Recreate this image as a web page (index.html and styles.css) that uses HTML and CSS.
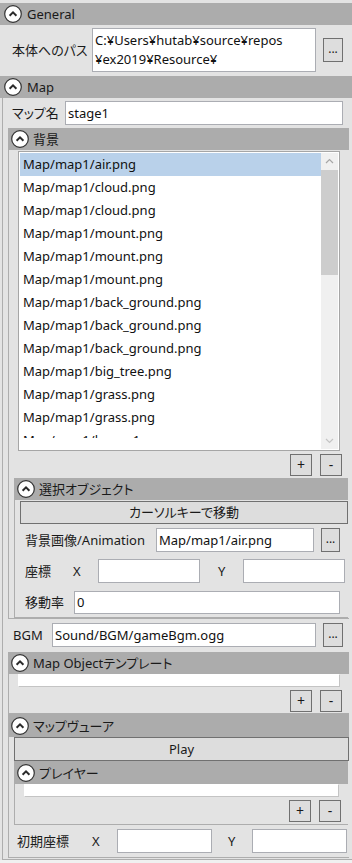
FILE: index.html
```html
<!DOCTYPE html>
<html lang="ja">
<head>
<meta charset="utf-8">
<link rel="stylesheet" href="styles.css">
</head>
<body>
<div class="page">
  <section class="exp top gen">
    <div class="head top-head">
      <svg class="chev" viewBox="0 0 18 18"><circle cx="9" cy="9" r="8.3" fill="#fff" stroke="#333" stroke-width="1.2"/><polyline points="5.6,10.8 9,7.4 12.4,10.8" fill="none" stroke="#2a2a2a" stroke-width="2"/></svg>
      <span class="title">General</span>
    </div>
    <div class="gen-body">
      <span class="lbl lbl-path">本体へのパス</span>
      <div class="tb tb-path">C:¥Users¥hutab¥source¥repos<br>¥ex2019¥Resource¥</div>
      <button class="btn btn-dots btn-dots-gen">...</button>
    </div>
  </section>

  <section class="exp top map">
    <div class="head top-head">
      <svg class="chev" viewBox="0 0 18 18"><circle cx="9" cy="9" r="8.3" fill="#fff" stroke="#333" stroke-width="1.2"/><polyline points="5.6,10.8 9,7.4 12.4,10.8" fill="none" stroke="#2a2a2a" stroke-width="2"/></svg>
      <span class="title">Map</span>
    </div>
    <div class="map-body">
      <div class="row row-name">
        <span class="lbl lbl-name">マップ名</span>
        <div class="tb tb-name">stage1</div>
      </div>

      <section class="exp sub bg">
        <div class="head">
          <svg class="chev" viewBox="0 0 18 18"><circle cx="9" cy="9" r="8.3" fill="#fff" stroke="#333" stroke-width="1.2"/><polyline points="5.6,10.8 9,7.4 12.4,10.8" fill="none" stroke="#2a2a2a" stroke-width="2"/></svg>
          <span class="title">背景</span>
        </div>
        <div class="sub-body bg-body">
          <div class="list">
            <div class="items">
              <div class="item sel">Map/map1/air.png</div>
              <div class="item">Map/map1/cloud.png</div>
              <div class="item">Map/map1/cloud.png</div>
              <div class="item">Map/map1/mount.png</div>
              <div class="item">Map/map1/mount.png</div>
              <div class="item">Map/map1/mount.png</div>
              <div class="item">Map/map1/back_ground.png</div>
              <div class="item">Map/map1/back_ground.png</div>
              <div class="item">Map/map1/back_ground.png</div>
              <div class="item">Map/map1/big_tree.png</div>
              <div class="item">Map/map1/grass.png</div>
              <div class="item">Map/map1/grass.png</div>
              <div class="item">Map/map1/leaves1.png</div>
            </div>
            <div class="sbar">
              <div class="sarrow"><svg viewBox="0 0 17 17"><polyline points="5,10 8.5,6.5 12,10" fill="none" stroke="#a6a6a6" stroke-width="1.2"/></svg></div>
              <div class="thumb"></div>
              <div class="strack"></div>
              <div class="sarrow"><svg viewBox="0 0 17 17"><polyline points="5,7 8.5,10.5 12,7" fill="none" stroke="#c4c4c4" stroke-width="1.2"/></svg></div>
            </div>
          </div>
          <div class="pm pm-bg">
            <button class="btn sq">+</button>
            <button class="btn sq">-</button>
          </div>

          <section class="exp sub sel-obj">
            <div class="head">
              <svg class="chev" viewBox="0 0 18 18"><circle cx="9" cy="9" r="8.3" fill="#fff" stroke="#333" stroke-width="1.2"/><polyline points="5.6,10.8 9,7.4 12.4,10.8" fill="none" stroke="#2a2a2a" stroke-width="2"/></svg>
              <span class="title">選択オブジェクト</span>
            </div>
            <div class="sub-body sel-body">
              <button class="btn wide btn-cursor">カーソルキーで移動</button>
              <div class="row row-anim">
                <span class="lbl lbl-anim">背景画像/Animation</span>
                <div class="tb tb-anim">Map/map1/air.png</div>
                <button class="btn btn-dots btn-dots-anim">...</button>
              </div>
              <div class="row row-pos">
                <span class="lbl lbl-pos">座標</span>
                <span class="lbl lbl-x">X</span>
                <div class="tb tb-xy"></div>
                <span class="lbl lbl-y">Y</span>
                <div class="tb tb-xy"></div>
              </div>
              <div class="row row-rate">
                <span class="lbl lbl-rate">移動率</span>
                <div class="tb tb-rate">0</div>
              </div>
            </div>
          </section>
        </div>
      </section>

      <div class="row row-bgm">
        <span class="lbl lbl-bgm">BGM</span>
        <div class="tb tb-bgm">Sound/BGM/gameBgm.ogg</div>
        <button class="btn btn-dots btn-dots-bgm">...</button>
      </div>

      <section class="exp sub tmpl">
        <div class="head">
          <svg class="chev" viewBox="0 0 18 18"><circle cx="9" cy="9" r="8.3" fill="#fff" stroke="#333" stroke-width="1.2"/><polyline points="5.6,10.8 9,7.4 12.4,10.8" fill="none" stroke="#2a2a2a" stroke-width="2"/></svg>
          <span class="title">Map Objectテンプレート</span>
        </div>
        <div class="sub-body tmpl-body">
          <div class="elist elist-tmpl"></div>
          <div class="pm pm-tmpl">
            <button class="btn sq">+</button>
            <button class="btn sq">-</button>
          </div>
        </div>
      </section>

      <section class="exp sub viewer">
        <div class="head head23">
          <svg class="chev" viewBox="0 0 18 18"><circle cx="9" cy="9" r="8.3" fill="#fff" stroke="#333" stroke-width="1.2"/><polyline points="5.6,10.8 9,7.4 12.4,10.8" fill="none" stroke="#2a2a2a" stroke-width="2"/></svg>
          <span class="title">マップヴューア</span>
        </div>
        <div class="sub-body viewer-body">
          <button class="btn wide btn-play">Play</button>
          <section class="exp sub player">
            <div class="head head23">
              <svg class="chev" viewBox="0 0 18 18"><circle cx="9" cy="9" r="8.3" fill="#fff" stroke="#333" stroke-width="1.2"/><polyline points="5.6,10.8 9,7.4 12.4,10.8" fill="none" stroke="#2a2a2a" stroke-width="2"/></svg>
              <span class="title">プレイヤー</span>
            </div>
            <div class="sub-body player-body">
              <div class="elist elist-player"></div>
              <div class="pm pm-player">
                <button class="btn sq">+</button>
                <button class="btn sq">-</button>
              </div>
            </div>
          </section>
          <div class="row row-init">
            <span class="lbl lbl-init">初期座標</span>
            <span class="lbl lbl-ix">X</span>
            <div class="tb tb-init"></div>
            <span class="lbl lbl-iy">Y</span>
            <div class="tb tb-init"></div>
          </div>
        </div>
      </section>
    </div>
  </section>
</div>
</body>
</html>
```

FILE: styles.css
```css
* { box-sizing: border-box; margin: 0; padding: 0; }

html, body { background: #f0f0f0; }

body {
  width: 352px;
  height: 863px;
  overflow: hidden;
  font-family: "Noto Sans", "Noto Sans CJK JP", sans-serif;
  font-size: 13px;
  color: #1a1a1a;
  font-feature-settings: "palt";
}

.page {
  background: #e3e3e3;
  padding-top: 3px;
}

/* expander headers */
.head {
  height: 22px;
  background: #acacac;
  display: flex;
  align-items: center;
  padding-left: 3px;
  gap: 4px;
  white-space: nowrap;
}
.head23 { height: 23px; }
.top-head { padding-left: 4px; gap: 5px; }
.chev { width: 18px; height: 18px; flex: none; display: block; }
.title { line-height: 18px; }

/* common controls */
.row { display: flex; align-items: flex-start; }
.lbl { flex: none; line-height: 24px; white-space: nowrap; }
.tb {
  flex: none;
  background: #fff;
  border: 1px solid #abadb3;
  height: 24px;
  line-height: 22px;
  padding: 0 2px;
  white-space: nowrap;
  overflow: hidden;
  color: #111;
}
.btn {
  flex: none;
  font: inherit;
  color: #1a1a1a;
  background: #dddddd;
  border: 1px solid #707070;
  display: flex;
  align-items: center;
  justify-content: center;
  line-height: 1;
}
.btn-dots { width: 20px; height: 24px; padding-bottom: 2px; font-size: 12px; }
.sq { width: 22px; height: 22px; font-size: 14px; }
.wide { height: 24px; }

/* General */
.gen { margin-bottom: 1px; }
.gen-body {
  height: 50px;
  display: flex;
  align-items: flex-start;
  padding: 3px 0 0 12px;
}
.lbl-path { width: 80px; line-height: 44px; }
.tb-path {
  width: 224px;
  height: 44px;
  line-height: 19px;
  padding: 2px 2px;
}
.btn-dots-gen { margin: 10px 0 0 7px; }

/* Map */
.map-body {
  margin-left: 2px;
  border-left: 1px solid #adadad;
  border-bottom: 1px solid #adadad;
  padding-bottom: 1px;
}
.row-name { height: 30px; padding: 3px 0 0 9px; }
.lbl-name { width: 53px; }
.tb-name { width: 278px; }

/* nested expanders */
.sub { margin-left: 5px; }
.sub-body {
  border-left: 1px solid #adadad;
  border-bottom: 1px solid #adadad;
}

.bg { width: 341px; }
.bg-body { padding-top: 1px; }

.list {
  margin-left: 9px;
  width: 322px;
  height: 300px;
  border: 1px solid #a6a6a6;
  background: #fff;
  padding: 1px;
  display: flex;
}
.items {
  flex: 1;
  height: 285px;
  overflow: hidden;
}
.item {
  height: 23px;
  line-height: 23px;
  padding-left: 3px;
  white-space: nowrap;
  color: #111;
}
.item.sel { background: #b9d1ea; }
.sbar {
  width: 17px;
  flex: none;
  display: flex;
  flex-direction: column;
  background: #f0f0f0;
}
.sarrow { height: 17px; flex: none; }
.sarrow svg { width: 17px; height: 17px; display: block; }
.thumb { height: 105px; background: #cdcdcd; flex: none; }
.strack { flex: 1; }

.pm { display: flex; gap: 8px; height: 27px; padding-top: 3px; }
.pm-bg { padding-left: 281px; }

.sel-obj { width: 334px; }
.sel-body { height: 118px; padding-top: 1px; }
.btn-cursor { margin-left: 5px; width: 328px; height: 23px; }
.row-anim { margin-top: 4px; height: 24px; padding-left: 10px; }
.lbl-anim { width: 131px; }
.tb-anim { width: 158px; }
.btn-dots-anim { width: 19px; margin-left: 7px; }
.row-pos { margin-top: 7px; height: 24px; padding-left: 10px; }
.lbl-pos { width: 48px; }
.lbl-x { width: 25px; }
.tb-xy { width: 102px; }
.lbl-y { width: 25px; margin-left: 18px; }
.row-rate { margin-top: 8px; height: 23px; padding-left: 10px; }
.lbl-rate { width: 49px; line-height: 23px; }
.tb-rate { width: 266px; height: 23px; line-height: 21px; }

.row-bgm { height: 33px; padding: 4px 0 0 10px; }
.lbl-bgm { width: 39px; }
.tb-bgm { width: 264px; }
.btn-dots-bgm { margin-left: 7px; }

.tmpl { width: 341px; }
.tmpl-body { height: 40px; }
.elist {
  height: 13px;
  background: #fff;
  border: 1px solid #c4c4c4;
  border-top-color: #ffffff;
  border-left-color: #ffffff;
}
.elist-tmpl { margin-left: 9px; width: 322px; }
.pm-tmpl { padding-left: 281px; }

.viewer { width: 341px; }
.viewer-body { height: 121px; }
.btn-play { margin-left: 5px; width: 335px; }
.player { width: 334px; }
.player-body { height: 41px; }
.elist-player { margin-left: 9px; width: 315px; }
.pm-player { padding-left: 274px; }

.row-init { height: 32px; padding: 4px 0 0 8px; }
.lbl-init { width: 75px; }
.lbl-ix { width: 25px; }
.tb-init { width: 95px; }
.lbl-iy { width: 24px; margin-left: 16px; }
```
